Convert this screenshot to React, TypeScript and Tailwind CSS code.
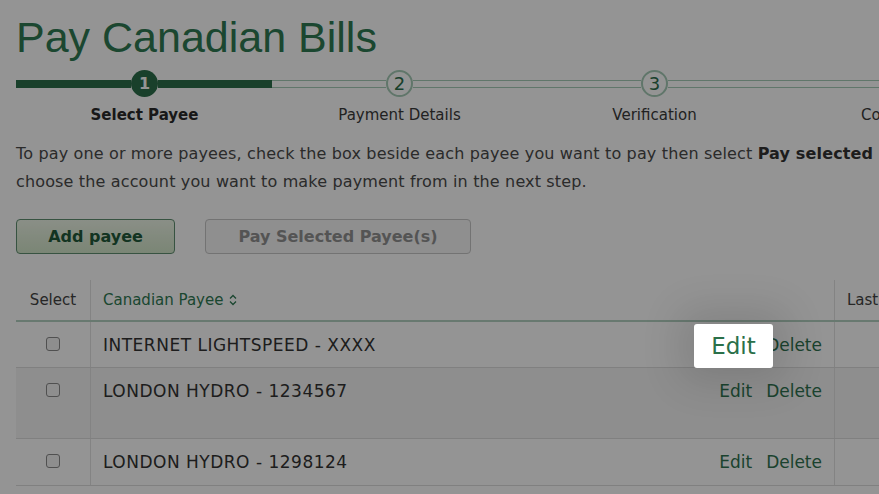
import React from "react";

const GREEN = "#2f7a53";

function StepCircle({ n, active }: { n: number; active?: boolean }) {
  return active ? (
    <div className="w-[27px] h-[27px] shrink-0 rounded-full bg-[#2c6e4b] flex items-center justify-center text-white text-[16px] font-bold leading-none">
      {n}
    </div>
  ) : (
    <div className="w-[27px] h-[27px] shrink-0 rounded-full border-2 border-[#a6cbb7] bg-white flex items-center justify-center text-[#2c6e4b] text-[18px] leading-none">
      {n}
    </div>
  );
}

function Bar({ filled }: { filled?: boolean }) {
  return filled ? (
    <div className="flex-1 h-[8px] bg-[#2c6e4b]" />
  ) : (
    <div className="flex-1 h-[8px] bg-white border-y border-[#a6cbb7]" />
  );
}

function Step({ n, label, active, done }: { n: number; label: string; active?: boolean; done?: boolean }) {
  return (
    <div className="w-[255px] shrink-0 flex flex-col">
      <div className="flex items-center h-[27px]">
        <Bar filled={active || done} />
        <StepCircle n={n} active={active} />
        <Bar filled={done || active} />
      </div>
      <div
        className={
          "mt-[8px] text-center text-[15px] leading-[20px] " +
          (active ? "font-bold text-[#2a2a2a]" : "text-[#3a3a3a]")
        }
      >
        {label}
      </div>
    </div>
  );
}

function Checkbox() {
  return <div className="w-[14px] h-[14px] rounded-[3px] border border-[#8a8a8a] bg-[#f4f4f4]" />;
}

function Row({ name, h, bg }: { name: string; h: string; bg?: string }) {
  return (
    <div className={"flex border-b border-[#dcdcdc] " + h + " " + (bg ?? "")}>
      <div className="w-[75px] shrink-0 flex justify-center pt-[15px] border-r border-[#e2e2e2]">
        <Checkbox />
      </div>
      <div className="w-[744px] shrink-0 flex justify-between pl-[12px] pr-[12px] pt-[12px] border-r border-[#e2e2e2] text-[17px] leading-[22px]">
        <span className="text-[#333333] tracking-[0.5px]">{name}</span>
        <span className="flex gap-[14px] text-[#2f7350]">
          <span>Edit</span>
          <span>Delete</span>
        </span>
      </div>
      <div className="flex-1" />
    </div>
  );
}

export default function App() {
  return (
    <div
      className="relative w-[879px] h-[494px] overflow-hidden bg-white"
      style={{ fontFamily: '"DejaVu Sans", Verdana, sans-serif' }}
    >
      <div className="w-[1200px] pl-[16px]">
        <h1
          className="pt-[15px] text-[43px] leading-[44px] font-normal"
          style={{ fontFamily: '"Liberation Sans", Arial, sans-serif', color: GREEN }}
        >
          Pay Canadian Bills
        </h1>

        <div className="mt-[11px] flex">
          <div className="w-[1px] shrink-0 h-[27px] flex items-center">
            <div className="w-full h-[8px] bg-[#2c6e4b]" />
          </div>
          <Step n={1} label="Select Payee" active />
          <Step n={2} label="Payment Details" />
          <Step n={3} label="Verification" />
          <Step n={4} label="Confirmation" />
        </div>

        <p className="mt-[15px] w-[880px] text-[16px] leading-[28px] tracking-[0.15px] text-[#4a4a4a]">
          To pay one or more payees, check the box beside each payee you want to pay then select{" "}
          <b className="text-[#333]">Pay selected</b>
          <br />
          choose the account you want to make payment from in the next step.
        </p>

        <div className="mt-[23px] flex gap-[30px]">
          <button className="w-[159px] h-[35px] rounded-[4px] border border-[#5f8f70] bg-gradient-to-b from-[#eef6e8] to-[#d3e6ca] text-[16px] font-bold text-[#215a3a]">
            Add payee
          </button>
          <button className="w-[266px] h-[35px] rounded-[4px] border border-[#c6c6c6] bg-[#f6f6f6] text-[16px] font-bold text-[#929292]">
            Pay Selected Payee(s)
          </button>
        </div>

        <div className="mt-[26px]">
          <div className="flex h-[42px] border-b-2 border-[#b3d1c1]">
            <div className="w-[75px] shrink-0 flex items-center justify-center border-r border-[#e2e2e2] text-[15px] text-[#444]">
              Select
            </div>
            <div className="w-[744px] shrink-0 flex items-center pl-[12px] border-r border-[#e2e2e2] text-[15px]" style={{ color: GREEN }}>
              Canadian Payee
              <svg width="10" height="12" viewBox="0 0 10 12" className="ml-[5px]" fill="none" stroke={GREEN} strokeWidth="1.3">
                <path d="M2 4.5 L5 1.5 L8 4.5" />
                <path d="M2 7.5 L5 10.5 L8 7.5" />
              </svg>
            </div>
            <div className="flex-1 flex items-center pl-[12px] text-[15px] text-[#444]">Last Payment</div>
          </div>
          <Row name="INTERNET LIGHTSPEED - XXXX" h="h-[46px]" />
          <Row name="LONDON HYDRO - 1234567" h="h-[71px]" bg="bg-[#f4f4f4]" />
          <Row name="LONDON HYDRO - 1298124" h="h-[47px]" />
        </div>
      </div>

      <div className="absolute inset-0 bg-black/[0.42]" />

      <div className="absolute left-[694px] top-[324px] w-[79px] h-[44px] rounded-[3px] bg-white flex items-center justify-center shadow-[0_0_40px_14px_rgba(0,0,0,0.12)]">
        <span className="text-[23px] leading-none text-[#2b7049]">Edit</span>
      </div>
    </div>
  );
}
